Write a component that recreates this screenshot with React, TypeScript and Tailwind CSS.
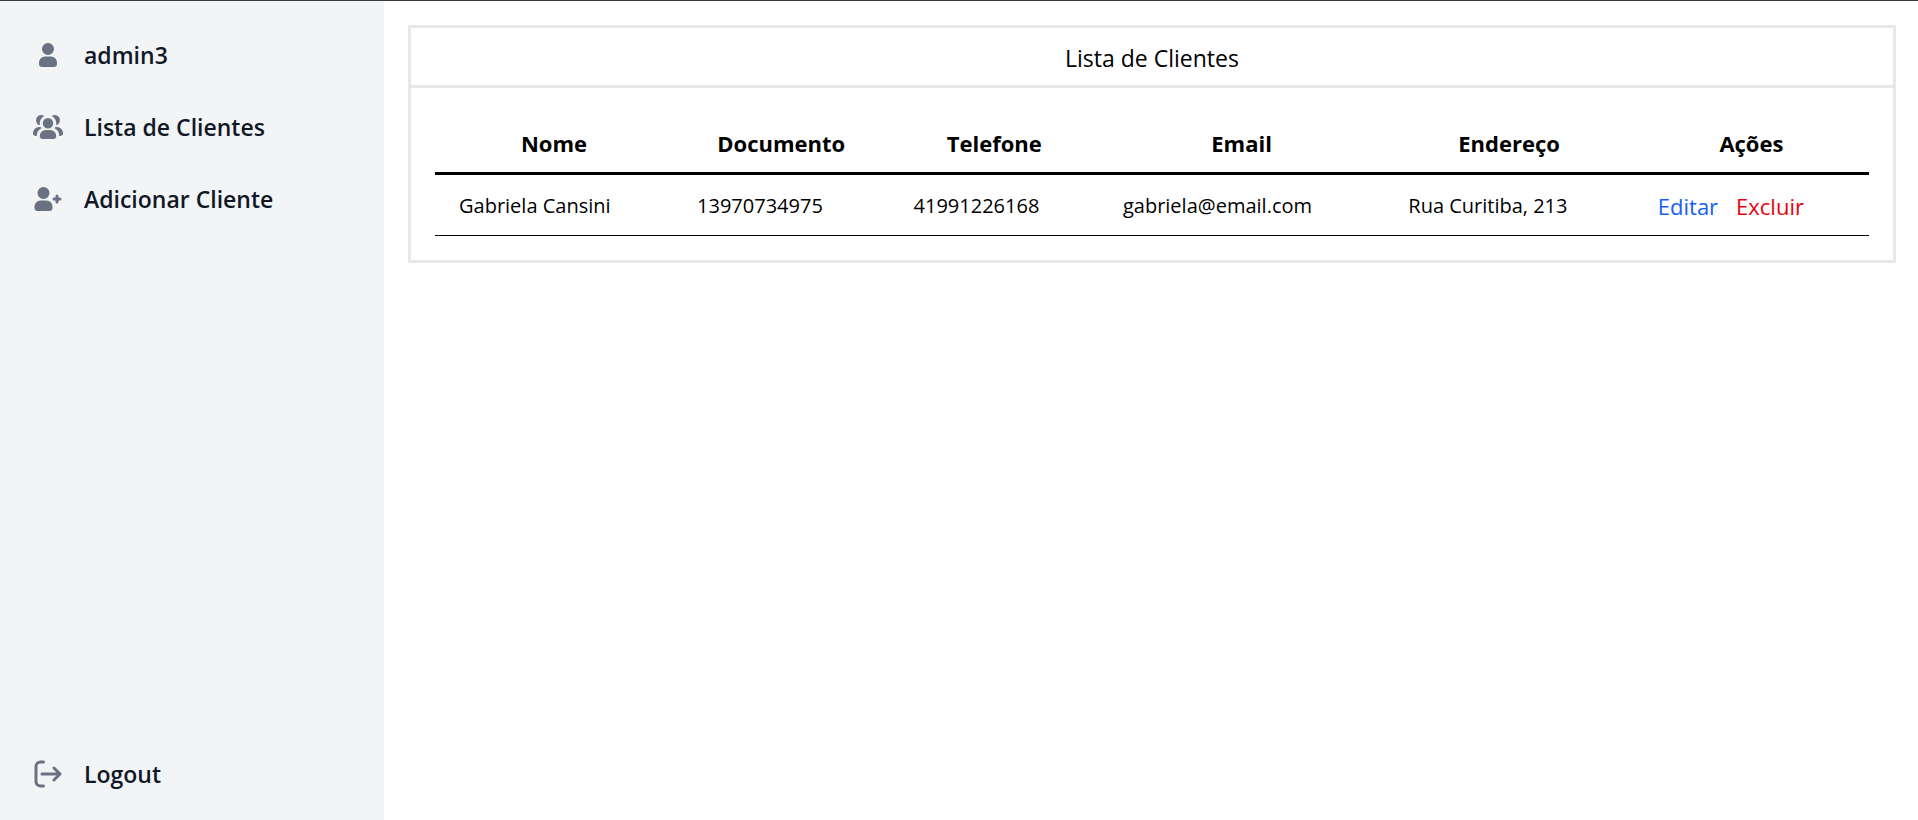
import type { ReactNode } from "react";

const menu = [
  {
    label: "admin3",
    path: "M12 4a4 4 0 1 0 0 8 4 4 0 0 0 0-8Zm-2 9a4 4 0 0 0-4 4v1a2 2 0 0 0 2 2h8a2 2 0 0 0 2-2v-1a4 4 0 0 0-4-4h-4Z",
  },
  {
    label: "Lista de Clientes",
    path: "M12 6a3.5 3.5 0 1 0 0 7 3.5 3.5 0 0 0 0-7Zm-1.5 8a4 4 0 0 0-4 4 2 2 0 0 0 2 2h7a2 2 0 0 0 2-2 4 4 0 0 0-4-4h-3Zm6.82-3.096a5.51 5.51 0 0 0-2.797-6.293 3.5 3.5 0 1 1 2.796 6.292ZM19.5 18h.5a2 2 0 0 0 2-2 4 4 0 0 0-4-4h-1.1a5.503 5.503 0 0 1-.471.762A5.998 5.998 0 0 1 19.5 18ZM4 7.5a3.5 3.5 0 0 1 5.477-2.889 5.5 5.5 0 0 0-2.796 6.293A3.501 3.501 0 0 1 4 7.5ZM7.1 12H6a4 4 0 0 0-4 4 2 2 0 0 0 2 2h.5a5.998 5.998 0 0 1 3.071-5.238A5.505 5.505 0 0 1 7.1 12Z",
  },
  {
    label: "Adicionar Cliente",
    path: "M9 4a4 4 0 1 0 0 8 4 4 0 0 0 0-8Zm-2 9a4 4 0 0 0-4 4v1a2 2 0 0 0 2 2h8a2 2 0 0 0 2-2v-1a4 4 0 0 0-4-4H7Zm8-1a1 1 0 0 1 1-1h1v-1a1 1 0 1 1 2 0v1h1a1 1 0 1 1 0 2h-1v1a1 1 0 1 1-2 0v-1h-1a1 1 0 0 1-1-1Z",
  },
];

const columns = [
  { label: "Nome", width: "w-[16.6%]" },
  { label: "Documento", width: "w-[15.1%]" },
  { label: "Telefone", width: "w-[14.6%]" },
  { label: "Email", width: "w-[19.9%]" },
  { label: "Endereço", width: "w-[17.4%]" },
  { label: "Ações", width: "w-[16.4%]" },
];

const clients = [
  {
    nome: "Gabriela Cansini",
    documento: "13970734975",
    telefone: "41991226168",
    email: "gabriela@email.com",
    endereco: "Rua Curitiba, 213",
  },
];

function MenuItem({ label, children }: { label: string; children: ReactNode }) {
  return (
    <li>
      <a
        href="#"
        className="flex items-center rounded-xl p-3 text-[23px] leading-9 font-semibold text-gray-900"
      >
        <svg
          className="size-9 shrink-0 text-gray-500"
          viewBox="0 0 24 24"
          fill="none"
          aria-hidden="true"
        >
          {children}
        </svg>
        <span className="ms-[18px]">{label}</span>
      </a>
    </li>
  );
}

export default function App() {
  return (
    <div className="flex min-h-screen border-t border-[#38383b] bg-white font-['Open_Sans',sans-serif] text-black">
      <aside className="flex w-96 shrink-0 flex-col justify-between bg-gray-100 px-[18px] pt-6 pb-4">
        <nav>
          <ul className="space-y-3">
            {menu.map((item) => (
              <MenuItem key={item.label} label={item.label}>
                <path fill="currentColor" fillRule="evenodd" clipRule="evenodd" d={item.path} />
              </MenuItem>
            ))}
          </ul>
        </nav>
        <ul>
          <MenuItem label="Logout">
            <path
              stroke="currentColor"
              strokeWidth="2"
              strokeLinecap="round"
              strokeLinejoin="round"
              d="M20 12H8m12 0-4 4m4-4-4-4M9 4H7a3 3 0 0 0-3 3v10a3 3 0 0 0 3 3h2"
            />
          </MenuItem>
        </ul>
      </aside>

      <main className="min-w-0 grow px-6 pt-6 pr-[22px]">
        <section className="border-3 border-gray-200">
          <h1 className="border-b-3 border-gray-200 pt-3 pb-[9px] text-center text-[23px] leading-9">
            Lista de Clientes
          </h1>
          <div className="p-6">
            <table className="w-full table-fixed border-collapse">
              <thead>
                <tr className="border-b-3 border-black">
                  {columns.map((column) => (
                    <th
                      key={column.label}
                      scope="col"
                      className={`${column.width} px-6 pt-[13px] pb-[11px] text-[22px] leading-9 font-bold`}
                    >
                      {column.label}
                    </th>
                  ))}
                </tr>
              </thead>
              <tbody className="[&_td]:px-6 [&_td]:pt-[13px] [&_td]:pb-[11px]">
                {clients.map((client) => (
                  <tr key={client.documento} className="border-b border-black text-[20px] leading-9">
                    <td>{client.nome}</td>
                    <td>{client.documento}</td>
                    <td>{client.telefone}</td>
                    <td>{client.email}</td>
                    <td>{client.endereco}</td>
                    <td className="text-[22px]">
                      <button type="button" className="mr-[18px] text-blue-600">
                        Editar
                      </button>
                      <button type="button" className="text-red-600">
                        Excluir
                      </button>
                    </td>
                  </tr>
                ))}
              </tbody>
            </table>
          </div>
        </section>
      </main>
    </div>
  );
}
